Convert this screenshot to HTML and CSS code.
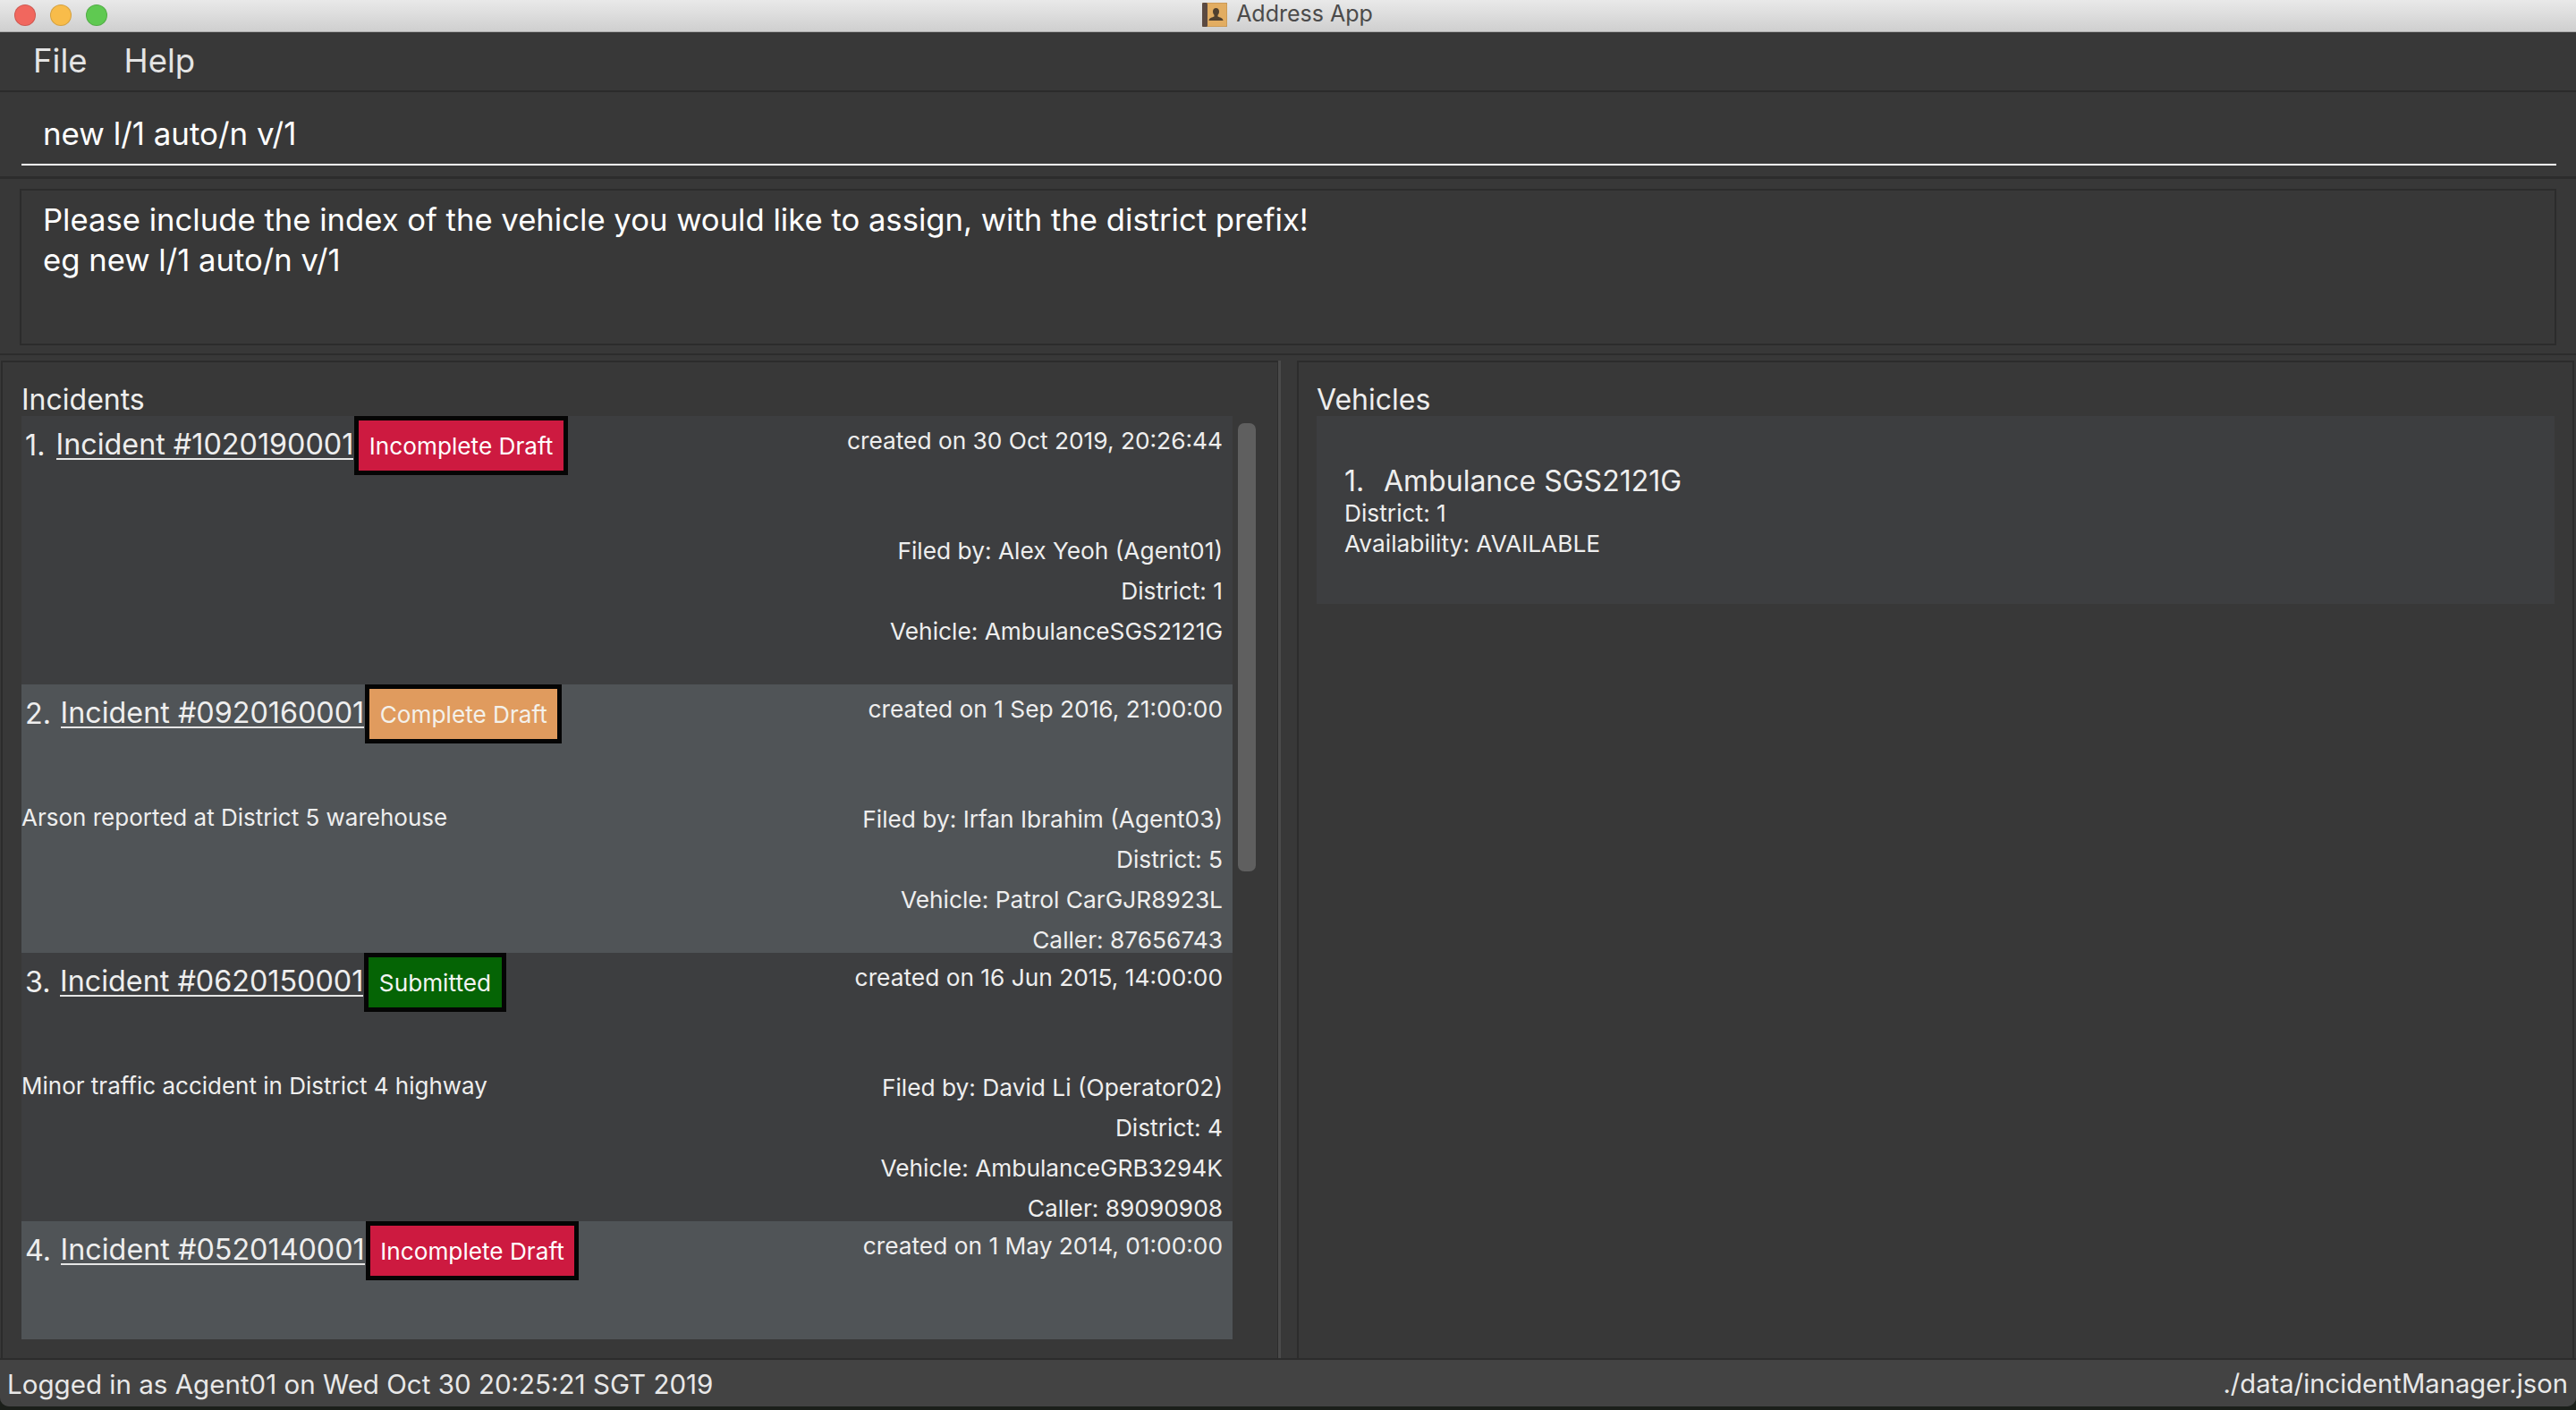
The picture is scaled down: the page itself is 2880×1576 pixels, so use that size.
FILE: index.html
```html
<!DOCTYPE html>
<html lang="en">
<head>
<meta charset="utf-8">
<title>Address App</title>
<link rel="stylesheet" href="styles.css">
</head>
<body>
<div class="window">
  <header class="titlebar">
    <div class="lights">
      <span class="light red"></span>
      <span class="light yellow"></span>
      <span class="light green"></span>
    </div>
    <div class="title">
      <svg class="book" width="28" height="27" viewBox="0 0 28 27">
        <rect x="0" y="0" width="28" height="27" rx="2" fill="#e2ad62" stroke="#b98a4a" stroke-width="1"/>
        <rect x="0" y="0" width="6" height="27" rx="1.5" fill="#5b4a42"/>
        <path d="M9 20c0-3 4-3.500 6-4.500v-1.800c-1-1-1.500-2.200-1.500-4 0-2.200 1.400-3.700 3.500-3.700s3.500 1.500 3.500 3.700c0 1.800-.5 3-1.500 4v1.800c2 1 6 1.500 6 4.500z" fill="#50402f" transform="translate(-1.500 0)"/>
      </svg>
      <span>Address App</span>
    </div>
  </header>

  <nav class="menubar">
    <span class="menu-item">File</span>
    <span class="menu-item">Help</span>
  </nav>

  <section class="command">
    <div class="command-input">new l/1 auto/n v/1</div>
  </section>

  <section class="result">
    <div class="result-box">
      <p class="result-line">Please include the index of the vehicle you would like to assign, with the district prefix!</p>
      <p class="result-line">eg new l/1 auto/n v/1</p>
    </div>
  </section>

  <main class="panels">
    <section class="panel panel-left">
      <h2 class="panel-title">Incidents</h2>
      <div class="list-wrap">
        <div class="list">
          <article class="incident">
            <div class="incident-head">
              <span class="num">1.</span>
              <span class="incident-id">Incident #1020190001</span>
              <span class="badge crimson">Incomplete Draft</span>
              <span class="created">created on 30 Oct 2019, 20:26:44</span>
            </div>
            <div class="incident-body">
              <p class="desc"></p>
              <div class="meta">
                <p>Filed by: Alex Yeoh (Agent01)</p>
                <p>District: 1</p>
                <p>Vehicle: AmbulanceSGS2121G</p>
              </div>
            </div>
          </article>
          <article class="incident alt">
            <div class="incident-head">
              <span class="num">2.</span>
              <span class="incident-id">Incident #0920160001</span>
              <span class="badge orange">Complete Draft</span>
              <span class="created">created on 1 Sep 2016, 21:00:00</span>
            </div>
            <div class="incident-body">
              <p class="desc">Arson reported at District 5 warehouse</p>
              <div class="meta">
                <p>Filed by: Irfan Ibrahim (Agent03)</p>
                <p>District: 5</p>
                <p>Vehicle: Patrol CarGJR8923L</p>
                <p>Caller: 87656743</p>
              </div>
            </div>
          </article>
          <article class="incident">
            <div class="incident-head">
              <span class="num">3.</span>
              <span class="incident-id">Incident #0620150001</span>
              <span class="badge darkgreen">Submitted</span>
              <span class="created">created on 16 Jun 2015, 14:00:00</span>
            </div>
            <div class="incident-body">
              <p class="desc">Minor traffic accident in District 4 highway</p>
              <div class="meta">
                <p>Filed by: David Li (Operator02)</p>
                <p>District: 4</p>
                <p>Vehicle: AmbulanceGRB3294K</p>
                <p>Caller: 89090908</p>
              </div>
            </div>
          </article>
          <article class="incident alt">
            <div class="incident-head">
              <span class="num">4.</span>
              <span class="incident-id">Incident #0520140001</span>
              <span class="badge crimson">Incomplete Draft</span>
              <span class="created">created on 1 May 2014, 01:00:00</span>
            </div>
          </article>
        </div>
        <div class="scrollbar"><div class="thumb"></div></div>
      </div>
    </section>
    <div class="divider"></div>
    <section class="panel panel-right">
      <h2 class="panel-title">Vehicles</h2>
      <div class="vehicle">
        <div class="vehicle-name"><span class="vehicle-num">1.</span><span>Ambulance SGS2121G</span></div>
        <p class="vehicle-line">District: 1</p>
        <p class="vehicle-line">Availability: AVAILABLE</p>
      </div>
    </section>
  </main>

  <footer class="statusbar">
    <span>Logged in as Agent01 on Wed Oct 30 20:25:21 SGT 2019</span>
    <span class="status-path">./data/incidentManager.json</span>
  </footer>
</div>
</body>
</html>
```

FILE: styles.css
```css
* { box-sizing: border-box; }
html, body { margin: 0; padding: 0; }
body {
  width: 2880px;
  height: 1576px;
  overflow: hidden;
  background: #1b1f1a;
  font-family: Inter, "Liberation Sans", sans-serif;
  color: #eeeeee;
}
p, h2 { margin: 0; font-weight: 400; }

.window {
  width: 2880px;
  height: 1572px;
  display: flex;
  flex-direction: column;
  background: #383838;
  border-radius: 0 0 10px 10px;
  overflow: hidden;
}

.titlebar {
  height: 36px;
  flex: none;
  display: grid;
  grid-template-columns: 1fr auto 1fr;
  align-items: center;
  padding-bottom: 2px;
  background: linear-gradient(#e9e9e9, #cfcfcf);
  border-bottom: 1px solid #aaaaaa;
}
.lights { display: flex; gap: 16px; padding-left: 16px; }
.light { width: 24px; height: 24px; border-radius: 50%; border: 1px solid rgba(0,0,0,.14); }
.red { background: #f1675e; }
.yellow { background: #f8bc4a; }
.green { background: #5fc951; }
.title {
  display: flex;
  align-items: center;
  gap: 10px;
  font-size: 25px;
  line-height: 30px;
  color: #4b4b4b;
  margin-left: -1px;
}
.title span { margin-top: -3px; }
.book { flex: none; }

.menubar {
  height: 67px;
  flex: none;
  display: flex;
  align-items: center;
  gap: 41px;
  padding: 0 0 1px 37px;
  border-bottom: 2px solid #2b2b2b;
  font-size: 36.5px;
  color: #e4e4e4;
}

.command {
  height: 97px;
  flex: none;
  padding: 0 22px 0 24px;
  border-bottom: 3px solid #2c2c2c;
}
.command-input {
  height: 82px;
  padding: 23px 0 0 24px;
  font-size: 34.9px;
  line-height: 46px;
  color: #ffffff;
  border-bottom: 2px solid #ffffff;
}

.result {
  height: 197px;
  flex: none;
  padding: 11px 22px 0 22px;
  border-bottom: 2px solid #2c2c2c;
}
.result-box {
  height: 175px;
  padding: 10px 24px;
  border: 2px solid #2c2c2c;
  font-size: 34.65px;
  line-height: 45px;
  color: #ffffff;
}

.panels {
  height: 1123px;
  flex: none;
  display: flex;
  padding-top: 6px;
  border-bottom: 2px solid #2c2c2c;
}
.panel {
  border: solid #2c2c2c;
  border-width: 2px 0 0 2px;
  display: flex;
  flex-direction: column;
}
.panel-left {
  width: 1429px;
  margin-left: 1px;
  padding: 0 22px 20px 21px;
  border-right-width: 2px;
}
.panel-right {
  flex: 1;
  margin-left: 18px;
  margin-right: 2px;
  padding: 0 20px 0 20px;
  border-right: 2px solid #2c2c2c;
}
.divider { width: 3px; flex: none; background: #4a4a4a; margin-left: -1px; }
.panel-title {
  height: 60px;
  flex: none;
  padding-top: 22px;
  font-size: 32px;
  line-height: 40px;
  color: #eeeeee;
}

.list-wrap { flex: 1; display: flex; min-height: 0; }
.list { width: 1354px; height: 1032px; overflow: hidden; flex: none; }
.scrollbar { flex: none; padding: 8px 0 0 6px; }
.thumb { width: 20px; height: 501px; border-radius: 7px; background: #5f5f5f; }

.incident { height: 300px; background: #3d3e40; display: flex; flex-direction: column; }
.incident.alt { background: #505457; }
.incident-head { display: flex; flex: none; align-items: flex-start; height: 128px; }
.num { min-width: 38.5px; font-size: 32.3px; line-height: 40px; padding: 13px 10.5px 0 4px; white-space: nowrap; }
.incident-id {
  font-size: 32.3px;
  line-height: 30px;
  margin-top: 17px;
  border-bottom: 2px solid #e6e6e6;
  color: #eeeeee;
  white-space: nowrap;
}
.badge {
  height: 66px;
  padding: 0 11.500px;
  border: 5px solid #050505;
  font-size: 26.2px;
  line-height: 58px;
  white-space: nowrap;
  margin-left: 1px;
}
.crimson { background: #cd1a40; color: #fff; }
.orange { background: #e09b5e; color: #f4f1ea; }
.darkgreen { background: #056405; color: #f4f4f4; }
.created {
  margin-left: auto;
  padding-right: 11px;
  padding-top: 12px;
  font-size: 26.3px;
  line-height: 32px;
  color: #eeeeee;
  white-space: nowrap;
}
.incident-body { display: flex; justify-content: space-between; }
.desc { font-size: 26px; line-height: 42px; color: #eeeeee; white-space: nowrap; height: 45px; }
.meta { text-align: right; padding-right: 11px; font-size: 26.3px; line-height: 45px; color: #eeeeee; }

.vehicle {
  height: 210px;
  background: #3d3e40;
  padding: 54px 30px 0 31px;
}
.vehicle-name { display: flex; font-size: 32px; line-height: 38px; color: #eeeeee; }
.vehicle-num { width: 44px; flex: none; }
.vehicle-line { font-size: 26.3px; line-height: 34px; color: #eeeeee; }

.statusbar {
  flex: 1;
  display: flex;
  justify-content: space-between;
  align-items: center;
  padding: 1px 9px 0 8px;
  background: #434343;
  font-size: 29.55px;
  color: #e8e8e8;
}
.status-path { font-size: 29.2px; }
```
